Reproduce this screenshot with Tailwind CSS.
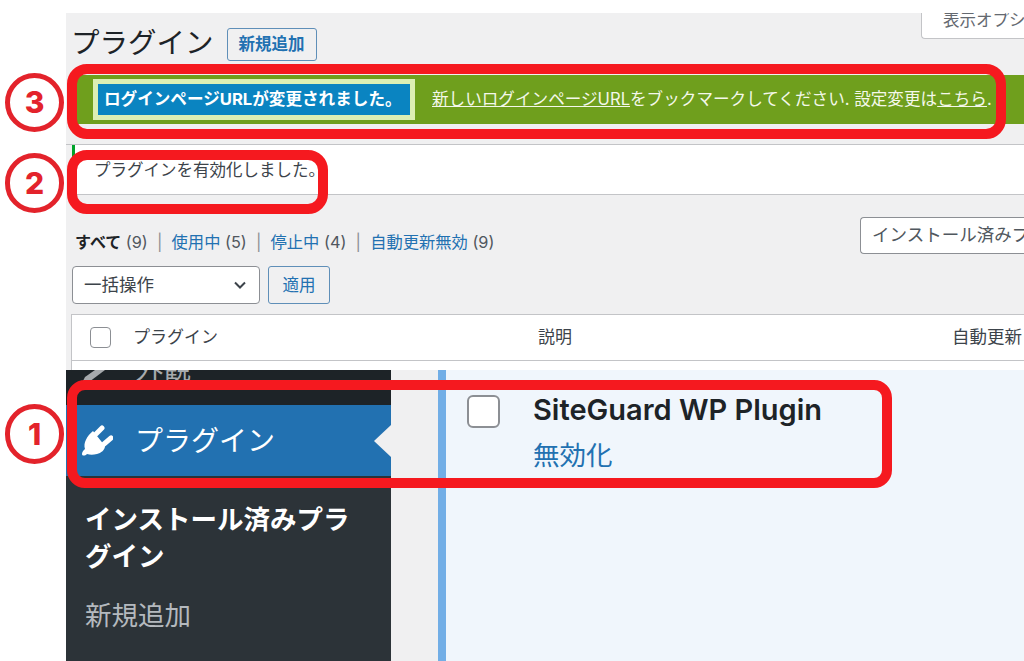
<!DOCTYPE html>
<html lang="ja">
<head>
    <meta charset="UTF-8">
    <title>プラグイン</title>
    <script src="https://cdn.jsdelivr.net/npm/@tailwindcss/browser@4"></script>
</head>
<body class="bg-white">
<div class="relative w-[1024px] h-[661px] overflow-hidden bg-white pl-[66px] pt-[13px] font-['Inter','Noto_Sans_CJK_JP',sans-serif] text-[#3c434a]">

    <!-- wp admin list, upper capture -->
    <div class="h-[357px] bg-[#f0f0f1] flex flex-col">
        <div class="h-[47px] flex items-start pl-[5px] relative">
            <h1 class="text-[28.5px] leading-[40px] mt-[10px] text-[#1d2327]">プラグイン</h1>
            <a class="ml-[13px] mt-[15px] w-[90px] h-[33px] flex items-center justify-center border border-[#5f8fb8] rounded-[3px] text-[#2271b1] text-[16.5px] font-bold">新規追加</a>
            <div class="absolute right-0 top-0 w-[103px] h-[26px] bg-white border border-[#c3c4c7] border-t-0 border-r-0 rounded-bl-[4px] pl-[21px] text-[16.5px] leading-[14px] text-[#646970] whitespace-nowrap overflow-hidden">表示オプション</div>
        </div>

        <div class="h-[85px] border-b border-[#c3c4c7] pt-[15px] pl-[11px]">
            <div class="h-[49px] bg-[#6f9f1d] flex items-center pl-[16px] text-[#f4f8ea] text-[16.6px] whitespace-nowrap">
                <div class="border-[5px] border-[#dcefb4]">
                    <div class="w-[312px] h-[31px] bg-[#0a84c1] text-white font-bold text-[16.6px] flex items-center pl-[6px]">ログインページURLが変更されました。</div>
                </div>
                <p class="ml-[17px]"><u>新しいログインページURL</u>をブックマークしてください. 設定変更は<u>こちら</u>.</p>
            </div>
        </div>

        <div class="ml-[6px] h-[50px] bg-white border-l-[3px] border-[#00a32a] border-b border-b-[#c3c4c7] pl-[19px] pt-[13px] text-[16.5px] leading-[24px]">プラグインを有効化しました。</div>

        <div class="relative pl-[9px] pt-[35px] text-[16.3px] leading-[24px] h-[71px] text-[#50575e] whitespace-nowrap">
            <b class="text-[#1d2327] text-[16px]">すべて</b> (9) &nbsp;<span class="text-[#8c8f94]">|</span>&nbsp; <a class="text-[#2271b1]">使用中</a> (5) &nbsp;<span class="text-[#8c8f94]">|</span>&nbsp; <a class="text-[#2271b1]">停止中</a> (4) &nbsp;<span class="text-[#8c8f94]">|</span>&nbsp; <a class="text-[#2271b1]">自動更新無効</a> (9)
            <div class="absolute right-0 top-[22px] w-[164px] h-[37px] bg-white border border-[#8c8f94] border-r-0 rounded-l-[4px] pl-[11px] text-[17.5px] leading-[33px] whitespace-nowrap overflow-hidden">インストール済みプラグインを検索</div>
        </div>

        <div class="flex pl-[6px] gap-[8px] h-[48px]">
            <div class="w-[188px] h-[38px] bg-white border border-[#8c8f94] rounded-[4px] flex items-center justify-between pl-[11px] pr-[12px] text-[17.5px]">
                <span>一括操作</span>
                <svg width="14" height="14" viewBox="0 0 14 14" fill="none" stroke="#3c434a" stroke-width="2"><path d="M2 4.5 L7 9.5 L12 4.5"/></svg>
            </div>
            <div class="w-[62px] h-[38px] border border-[#5f8fb8] rounded-[3px] flex items-center justify-center text-[#2271b1] text-[16.5px]">適用</div>
        </div>

        <div class="ml-[5px] h-[47px] bg-white border border-[#c3c4c7] border-r-0 flex items-center text-[17px] relative">
            <span class="ml-[18px] w-[21px] h-[21px] bg-white border border-[#8c8f94] rounded-[4px]"></span>
            <span class="ml-[22px]">プラグイン</span>
            <span class="absolute left-[466px]">説明</span>
            <span class="absolute left-[880px] text-[17.5px] whitespace-nowrap">自動更新</span>
        </div>
        <div class="ml-[5px] flex-1 bg-white border-l border-[#c3c4c7]"></div>
    </div>

    <!-- zoomed capture of the menu and plugin row -->
    <div class="h-[291px] flex">
        <div class="w-[325px] bg-[#2c3338] shrink-0 flex flex-col">
            <div class="relative h-[35px] bg-[#1d2327] pl-[69px] text-[#a7aaad] text-[28px] leading-[28px] overflow-hidden">
                <svg width="32" height="14" viewBox="0 0 32 14" class="absolute left-[13px] top-0" fill="#a7aaad"><path d="M16 0 L26 0 L10 12 L3 13 L6 7 Z"/></svg>
                <span class="block -mt-[15px]">外観</span>
            </div>
            <div class="relative h-[71px] bg-[#2271b1] flex items-center pl-[15px] text-white text-[28px]">
                <svg width="32" height="32" viewBox="0 0 32 32" class="shrink-0">
                    <path fill="#fff" d="M1 29 C1 27 2 26 4 24 C2 18 6 11 12 6 L24 21 C24 25 20 28 16 29 C12 30 9 30 6 29 C4 31 1 31 1 29 Z"/>
                    <path stroke="#fff" stroke-width="5" stroke-linecap="round" d="M15 9 L21 3 M23 19 L30 13"/>
                </svg>
                <span class="ml-[22px]">プラグイン</span>
                <span class="absolute right-0 top-[20px] w-0 h-0 border-y-[16px] border-y-transparent border-r-[17px] border-r-[#f0f0f1]"></span>
            </div>
            <div class="pl-[19px] pt-[25px] text-white font-bold text-[26.5px] leading-[37px] w-[300px]">インストール済みプラグイン</div>
            <div class="pl-[19px] pt-[22px] text-[#b4b9be] text-[26.5px] leading-[37px]">新規追加</div>
        </div>
        <div class="w-[47px] bg-[#f0f0f1] shrink-0"></div>
        <div class="flex-1 bg-[#f0f6fc] border-l-[8px] border-[#72aee6] pl-[21px] flex">
            <span class="mt-[25px] w-[33px] h-[33px] bg-white border-2 border-[#8c8f94] rounded-[6px] shrink-0"></span>
            <div class="ml-[33px] pt-[20px]">
                <div class="text-[#1d2327] font-semibold text-[29px] leading-[40px] whitespace-nowrap">SiteGuard WP Plugin</div>
                <div class="text-[#2271b1] text-[26.5px] leading-[50px]">無効化</div>
            </div>
        </div>
    </div>

    <!-- annotation frames -->
    <div class="absolute left-[67px] top-[64px] w-[939px] h-[75px] border-[10px] border-[#f5191f] rounded-[20px]"></div>
    <div class="absolute left-[67px] top-[150px] w-[261px] h-[64px] border-[10px] border-[#f5191f] rounded-[20px]"></div>
    <div class="absolute left-[67px] top-[380px] w-[825px] h-[108px] border-[10px] border-[#f5191f] rounded-[18px]"></div>

    <div class="absolute left-[5px] top-[73px] w-[59px] h-[59px] bg-white border-[5px] border-[#e3232b] rounded-full flex items-center justify-center text-[#e3232b] font-extrabold text-[30px]">3</div>
    <div class="absolute left-[5px] top-[153px] w-[59px] h-[60px] bg-white border-[5px] border-[#e3232b] rounded-full flex items-center justify-center text-[#e3232b] font-extrabold text-[30px]">2</div>
    <div class="absolute left-[5px] top-[404px] w-[59px] h-[60px] bg-white border-[5px] border-[#e3232b] rounded-full flex items-center justify-center text-[#e3232b] font-extrabold text-[30px]">1</div>
</div>
</body>
</html>
